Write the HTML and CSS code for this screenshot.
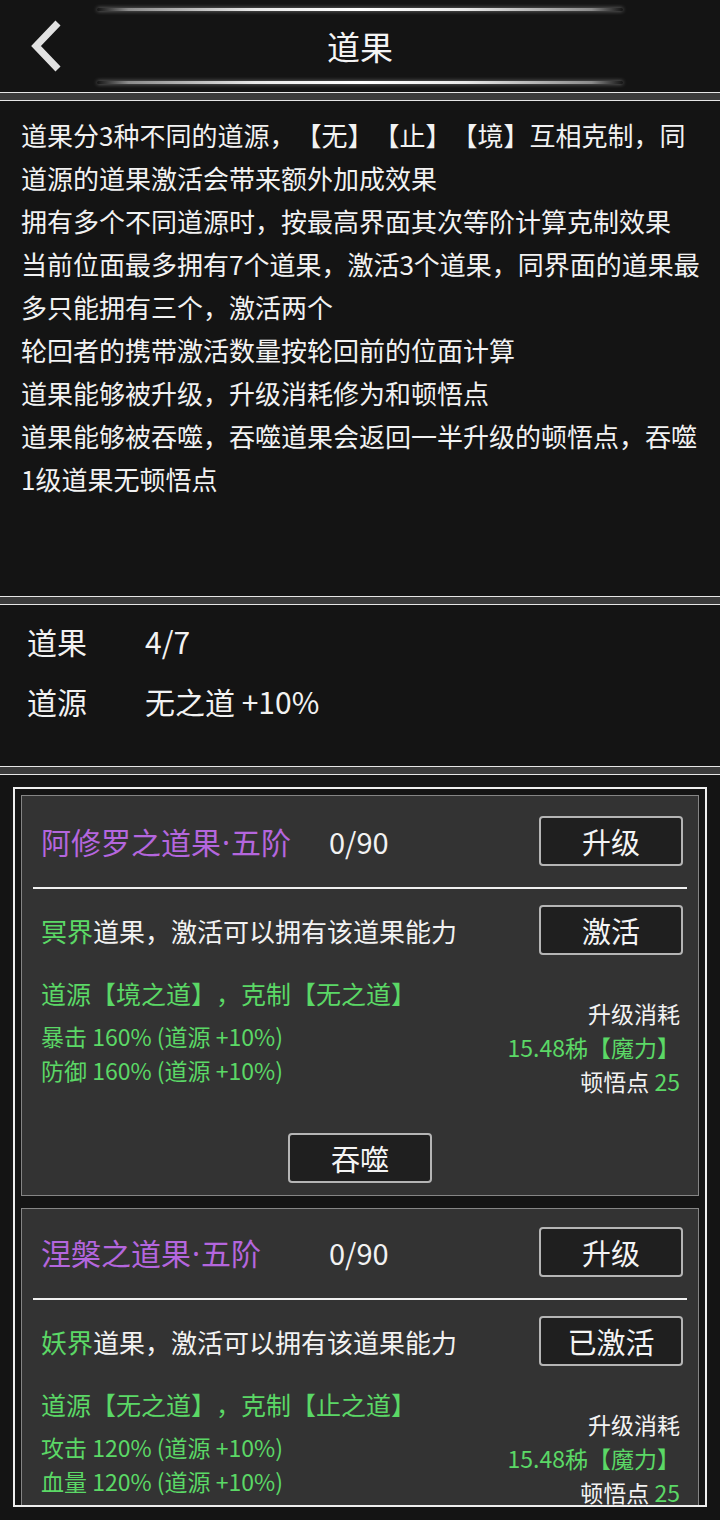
FILE: index.html
```html
<!DOCTYPE html>
<html lang="zh-CN">
<head>
<meta charset="utf-8">
<title>道果</title>
<link rel="stylesheet" href="styles.css">
</head>
<body>
<div class="page">
  <header class="topbar">
    <div class="glow"></div>
    <div class="bar">
      <svg class="back" viewBox="0 0 36 52" width="36" height="52" aria-hidden="true">
        <polyline points="30,3 8,26 30,49" fill="none" stroke="#e2e2e2" stroke-width="7" stroke-linejoin="miter" stroke-linecap="butt"/>
      </svg>
      <h1 class="title">道果</h1>
      <span></span>
    </div>
    <div class="glow"></div>
  </header>

  <section class="panel desc">
    <p>道果分3种不同的道源，【无】【止】【境】互相克制，同道源的道果激活会带来额外加成效果</p>
    <p>拥有多个不同道源时，按最高界面其次等阶计算克制效果</p>
    <p>当前位面最多拥有7个道果，激活3个道果，同界面的道果最多只能拥有三个，激活两个</p>
    <p>轮回者的携带激活数量按轮回前的位面计算</p>
    <p>道果能够被升级，升级消耗修为和顿悟点</p>
    <p>道果能够被吞噬，吞噬道果会返回一半升级的顿悟点，吞噬1级道果无顿悟点</p>
  </section>

  <section class="panel summary">
    <div class="kv"><span class="k">道果</span><span class="v">4/7</span></div>
    <div class="kv"><span class="k">道源</span><span class="v">无之道 +10%</span></div>
  </section>

  <section class="panel list-panel">
    <div class="list">
      <div class="card">
        <div class="head">
          <span class="name">阿修罗之道果<span class="dot">·</span>五阶</span>
          <span class="prog">0/90</span>
          <button class="btn">升级</button>
        </div>
        <div class="sep"></div>
        <div class="row">
          <span class="info"><span class="green">冥界</span>道果，激活可以拥有该道果能力</span>
          <button class="btn">激活</button>
        </div>
        <div class="body">
          <div class="left">
            <div class="src">道源【境之道】，克制【无之道】</div>
            <div class="stat">暴击 160% (道源 +10%)</div>
            <div class="stat">防御 160% (道源 +10%)</div>
          </div>
          <div class="right">
            <div>升级消耗</div>
            <div class="green">15.48秭【魔力】</div>
            <div>顿悟点 <span class="green">25</span></div>
          </div>
        </div>
        <div class="foot"><button class="btn">吞噬</button></div>
      </div>

      <div class="card second">
        <div class="head">
          <span class="name">涅槃之道果<span class="dot">·</span>五阶</span>
          <span class="prog">0/90</span>
          <button class="btn">升级</button>
        </div>
        <div class="sep"></div>
        <div class="row">
          <span class="info"><span class="green">妖界</span>道果，激活可以拥有该道果能力</span>
          <button class="btn">已激活</button>
        </div>
        <div class="body">
          <div class="left">
            <div class="src">道源【无之道】，克制【止之道】</div>
            <div class="stat">攻击 120% (道源 +10%)</div>
            <div class="stat">血量 120% (道源 +10%)</div>
          </div>
          <div class="right">
            <div>升级消耗</div>
            <div class="green">15.48秭【魔力】</div>
            <div>顿悟点 <span class="green">25</span></div>
          </div>
        </div>
      </div>
    </div>
  </section>
</div>
</body>
</html>
```

FILE: styles.css
```css
* { box-sizing: border-box; }

html, body {
  margin: 0;
  padding: 0;
  background: #3b3b3b;
}

body {
  font-family: "Noto Sans CJK SC", "Noto Sans", sans-serif;
  color: #f2f2f2;
  text-spacing-trim: space-all;
}

.page {
  width: 720px;
  height: 1520px;
  display: flex;
  flex-direction: column;
  gap: 7px;
  overflow: hidden;
}

/* ---------- top bar ---------- */
.topbar {
  height: 93px;
  flex: none;
  background: #141414;
  border-bottom: 1px solid #e6e6e6;
  padding: 8px 0;
  display: flex;
  flex-direction: column;
}

.glow {
  height: 3px;
  margin: 0 97px;
  border-radius: 2px;
  background: linear-gradient(90deg, rgba(120,120,120,0) 0%, #8c8c8c 6%, #e8e8e8 30%, #ffffff 50%, #e8e8e8 70%, #8c8c8c 94%, rgba(120,120,120,0) 100%);
  box-shadow: 0 0 4px rgba(255,255,255,0.45);
}

.bar {
  flex: 1;
  display: grid;
  grid-template-columns: 1fr auto 1fr;
  align-items: center;
}

.back {
  display: block;
  margin-left: 28px;
}

.title {
  margin: 0;
  font-size: 33px;
  font-weight: normal;
  line-height: 1;
  color: #f4f4f4;
}

/* ---------- panels ---------- */
.panel {
  background: #141414;
  border-top: 1px solid #e6e6e6;
  border-bottom: 1px solid #e6e6e6;
  flex: none;
}

.desc {
  height: 497px;
  padding: 12px 14px 0 21px;
  font-size: 26px;
  line-height: 43px;
}

.desc p {
  margin: 0;
}

.summary {
  height: 163px;
  padding: 6px 0 0 27px;
  font-size: 30px;
  line-height: 60px;
}

.kv {
  display: flex;
}

.kv .k {
  width: 118px;
}

.list-panel {
  flex: 1;
  border-bottom: none;
  padding: 12px 13px;
}

.list {
  height: 720px;
  border: 2px solid #eeeeee;
  padding: 6px;
  overflow: hidden;
  display: flex;
  flex-direction: column;
  gap: 12px;
}

/* ---------- cards ---------- */
.card {
  flex: none;
  background: #333333;
  border: 1px solid #858585;
  padding: 20px 0 12px;
}

.card.second {
  padding-top: 18px;
}

.head,
.row {
  display: flex;
  align-items: center;
  padding: 0 15px 0 19px;
}

.name {
  width: 288px;
  font-size: 30px;
  color: #b466de;
}

.dot {
  font-family: "Noto Sans", "DejaVu Sans", sans-serif;
  margin: 0 1px;
}

.prog {
  font-size: 29px;
  color: #f2f2f2;
}

.btn {
  margin-left: auto;
  width: 144px;
  height: 50px;
  background: #1f1f1f;
  border: 2px solid #b5b5b5;
  border-radius: 4px;
  color: #f4f4f4;
  font-family: inherit;
  font-size: 29px;
  line-height: 1;
  padding: 0;
}

.sep {
  height: 2px;
  background: #f0f0f0;
  margin: 21px 11px 16px;
}

.info {
  font-size: 26px;
}

.green {
  color: #5bd866;
}

.body {
  display: flex;
  justify-content: space-between;
  align-items: flex-start;
  padding: 0 18px 0 19px;
}

.left {
  margin-top: 20px;
  color: #5bd866;
}

.src {
  font-size: 25px;
  line-height: 36px;
  margin-bottom: 8px;
}

.stat {
  font-size: 23px;
  line-height: 34px;
}

.right {
  margin-top: 41px;
  text-align: right;
  font-size: 23px;
  line-height: 34px;
}

.foot {
  display: flex;
  justify-content: center;
  margin-top: 35px;
}

.foot .btn {
  margin-left: 0;
}
```
